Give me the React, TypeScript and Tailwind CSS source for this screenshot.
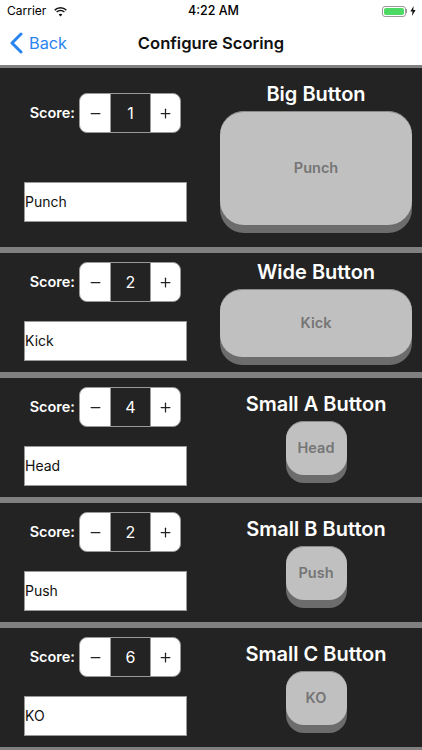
import { Minus, Plus } from "lucide-react";

const sections = [
  { title: "Big Button", label: "Punch", score: 1, size: "big" },
  { title: "Wide Button", label: "Kick", score: 2, size: "wide" },
  { title: "Small A Button", label: "Head", score: 4, size: "small" },
  { title: "Small B Button", label: "Push", score: 2, size: "small" },
  { title: "Small C Button", label: "KO", score: 6, size: "small" },
];

function StatusBar() {
  return (
    <div className="h-[20px] pt-[2px] flex items-center justify-between pl-[7px] pr-[6px] text-[12px] text-black relative">
      <div className="flex items-center gap-[7px]">
        <span>Carrier</span>
        <svg width="15" height="11" viewBox="0 0 15 11" fill="#111">
          <path d="M7.5 2.6c2 0 3.9.8 5.3 2.1l1-1.1A9.2 9.2 0 0 0 7.5 1a9.2 9.2 0 0 0-6.3 2.6l1 1.1a7.7 7.7 0 0 1 5.3-2.1z" />
          <path d="M7.5 5.3c1.3 0 2.5.5 3.4 1.3l1-1.1a6.5 6.5 0 0 0-8.8 0l1 1.1c.9-.8 2.1-1.3 3.4-1.3z" />
          <path d="M7.5 7.8c-.7 0-1.3.3-1.8.7l1.8 2 1.8-2c-.5-.4-1.1-.7-1.8-.7z" />
        </svg>
      </div>
      <span className="absolute left-[188px] font-medium text-[12.5px]">4:22 AM</span>
      <div className="flex items-center">
        <div className="w-[24px] h-[11px] rounded-[3px] border border-[#9a9a9a] p-[1px]">
          <div className="w-full h-full rounded-[2px] bg-[#4cd964]" />
        </div>
        <div className="w-[1px] h-[4px] bg-[#9a9a9a] mr-[3px]" />
        <svg width="6" height="10" viewBox="0 0 6 10" fill="#111">
          <path d="M3.6 0 0.4 5.6h2.1L2 10l3.6-6H3.3z" />
        </svg>
      </div>
    </div>
  );
}

function NavBar() {
  return (
    <div className="h-[45px] pt-[1px] flex items-center relative">
      <div className="flex items-center text-[#2a84f0] ml-[10px]">
        <svg width="13" height="22" viewBox="0 0 13 22" fill="none" stroke="currentColor" strokeWidth="3" strokeLinecap="round" strokeLinejoin="round" className="mr-[6px]">
          <path d="M11 2 2 11l9 9" />
        </svg>
        <span className="text-[16.3px]">Back</span>
      </div>
      <span className="absolute inset-x-0 text-center text-[16.6px] font-semibold text-[#111]">Configure Scoring</span>
    </div>
  );
}

function Stepper({ score }: { score: number }) {
  return (
    <div className="flex items-center">
      <span className="text-white text-[14.5px] font-semibold w-[75px] text-right mr-[4px]">Score:</span>
      <div className="w-[102px] h-[40px] flex rounded-[8px] bg-white border-[1.5px] border-[#999] overflow-hidden text-[#222]">
        <div className="w-[30px] flex items-center justify-center">
          <Minus size={15} strokeWidth={2} />
        </div>
        <div className="w-[41px] bg-[#232323] border-x-[1.5px] border-[#999] flex items-center justify-center text-[16px] text-white">
          {score}
        </div>
        <div className="flex-1 flex items-center justify-center">
          <Plus size={15} strokeWidth={2} />
        </div>
      </div>
    </div>
  );
}

function GameButton({ label, size }: { label: string; size: string }) {
  const shape =
    size === "big"
      ? "w-[192px] h-[122px] rounded-[24px]"
      : size === "wide"
        ? "w-[192px] h-[76px] rounded-[22px]"
        : "w-[61px] h-[62px] rounded-[18px]";
  return (
    <div className={`${shape} pb-[8px] bg-[#6c6c6c]`}>
      <div className="h-full pb-[1px] flex items-center justify-center bg-[#c0c0c0] border-t border-[#8a8a8a] rounded-[inherit] text-[14.5px] font-semibold text-[#757575]">
        {label}
      </div>
    </div>
  );
}

function Section({ title, label, score, size }: { title: string; label: string; score: number; size: string }) {
  const big = size === "big";
  return (
    <div className={`bg-[#232323] flex ${big ? "h-[179px]" : "h-[119px]"}`}>
      <div className={`w-[210px] flex flex-col justify-between ${big ? "pt-[25px] pb-[25px]" : "pt-[9px] pb-[11px]"}`}>
        <Stepper score={score} />
        <div className="ml-[24px] w-[163px] h-[40px] pb-[1px] bg-white border border-[#999] flex items-center text-[14px] text-[#111]">
          {label}
        </div>
      </div>
      <div className={`flex-1 flex flex-col items-center ${size === "wide" ? "pt-[6px]" : "pt-[13px]"}`}>
        <div className="text-white text-[20px] font-semibold leading-[26px] mb-[4px]">{title}</div>
        <GameButton label={label} size={size} />
      </div>
    </div>
  );
}

export default function App() {
  return (
    <div className="w-[422px] h-[750px] overflow-hidden bg-white" style={{ fontFamily: "Inter, 'Noto Sans', sans-serif" }}>
      <StatusBar />
      <NavBar />
      <div className="h-[3px] bg-[#808080]" />
      {sections.map((s, i) => (
        <div key={s.title}>
          <Section {...s} />
          <div className={i === 4 ? "h-[3px] bg-[#808080]" : "h-[6px] bg-[#808080]"} />
        </div>
      ))}
    </div>
  );
}
